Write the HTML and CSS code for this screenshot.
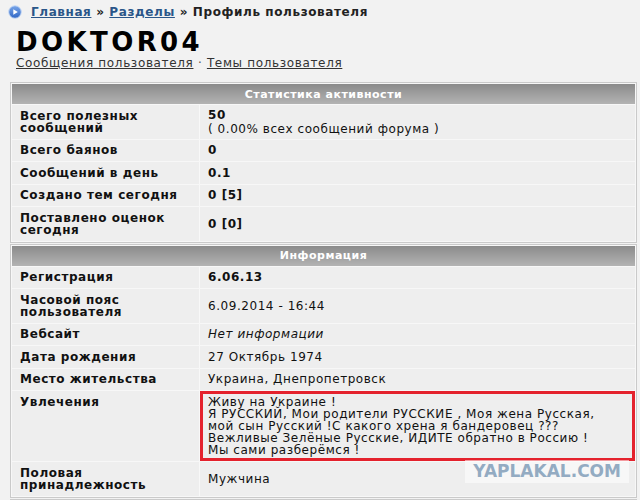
FILE: index.html
```html
<!DOCTYPE html>
<html lang="ru">
<head>
    <meta charset="UTF-8">
    <title>Профиль пользователя</title>
    <link rel="stylesheet" href="styles.css">
</head>
<body>
    <div class="crumbs">
        <svg class="crumb-icon" width="14" height="14" viewBox="0 0 14 14">
            <defs>
                <linearGradient id="ball" x1="0" y1="0" x2="0" y2="1">
                    <stop offset="0" stop-color="#79a6ea"/>
                    <stop offset="1" stop-color="#2f66c4"/>
                </linearGradient>
            </defs>
            <circle cx="7" cy="7" r="6.3" fill="url(#ball)" stroke="#c9dbf5" stroke-width="1"/>
            <path d="M5.3 4.2 L9.8 7 L5.3 9.8 Z" fill="#fff"/>
        </svg>
        <span><a href="#">Главная</a> &raquo; <a href="#">Разделы</a> &raquo; Профиль пользователя</span>
    </div>

    <h1 class="nick">DOKTOR04</h1>
    <div class="user-links">
        <a href="#">Сообщения пользователя</a> &middot; <a href="#">Темы пользователя</a>
    </div>

    <div class="box">
        <table class="profile">
            <tr><th colspan="2">Статистика активности</th></tr>
            <tr>
                <td class="label">Всего полезных сообщений</td>
                <td class="pair"><b>50</b><br>( 0.00% всех сообщений форума )</td>
            </tr>
            <tr><td class="label">Всего баянов</td><td><b>0</b></td></tr>
            <tr><td class="label">Сообщений в день</td><td><b>0.1</b></td></tr>
            <tr><td class="label">Создано тем сегодня</td><td><b>0 [5]</b></td></tr>
            <tr><td class="label">Поставлено оценок сегодня</td><td><b>0 [0]</b></td></tr>
        </table>
    </div>

    <div class="box">
        <table class="profile">
            <tr><th colspan="2">Информация</th></tr>
            <tr><td class="label">Регистрация</td><td><b>6.06.13</b></td></tr>
            <tr><td class="label">Часовой пояс пользователя</td><td>6.09.2014 - 16:44</td></tr>
            <tr><td class="label">Вебсайт</td><td><i>Нет информации</i></td></tr>
            <tr><td class="label">Дата рождения</td><td>27 Октябрь 1974</td></tr>
            <tr><td class="label">Место жительства</td><td>Украина, Днепропетровск</td></tr>
            <tr>
                <td class="label">Увлечения</td>
                <td class="marked">Живу на Украине !
Я РУССКИЙ, Мои родители РУССКИЕ , Моя жена Русская,
мой сын Русский !С какого хрена я бандеровец ???
Вежливые Зелёные Русские, ИДИТЕ обратно в Россию !
Мы сами разберёмся !</td>
            </tr>
            <tr><td class="label">Половая принадлежность</td><td>Мужчина</td></tr>
        </table>
        <div class="watermark">YAPLAKAL.COM</div>
    </div>

    <div class="box">
        <table class="profile">
            <tr><th colspan="2"></th></tr>
        </table>
    </div>
</body>
</html>
```

FILE: styles.css
```css
body {
    font-family: 'DejaVu Sans', Verdana, sans-serif;
    font-size: 12px;
    background: #f2f2f2;
    color: #111;
    margin: 0;
    padding: 0;
}

.crumbs {
    padding: 4px 8px 0 8px;
    height: 15px;
    line-height: 14px;
    font-weight: bold;
    font-size: 12px;
    letter-spacing: 0.6px;
    color: #222;
    display: flex;
    align-items: center;
    gap: 9px;
}

.crumbs a {
    color: #2a5689;
}

.nick {
    font-size: 26px;
    font-weight: bold;
    letter-spacing: 3.4px;
    color: #000;
    margin: 9px 0 0 16px;
    line-height: 28px;
}

.user-links {
    margin-left: 16px;
    font-size: 12px;
    letter-spacing: 0.65px;
    color: #555;
    line-height: 14px;
}

.user-links a {
    color: #333;
}

.box {
    position: relative;
    margin: 12px 3px 0 10px;
    border: 1px solid #cacaca;
    padding: 1px;
    background: #f7f7f7;
}

.box + .box {
    margin-top: 1px;
}

.profile {
    width: 100%;
    border-collapse: separate;
    border-spacing: 0 1px;
    margin: -1px 0;
    letter-spacing: 0.55px;
}

.profile th {
    background: linear-gradient(#8b8b8b, #b3b3b3);
    color: #fff;
    font-weight: bold;
    font-size: 11px;
    letter-spacing: 0.5px;
    height: 20px;
    padding: 0;
    text-align: center;
}

.profile td {
    background: #eeeeee;
    padding: 4.5px 8px 5px 8px;
    line-height: 12px;
    vertical-align: middle;
}

.profile td.label {
    width: 171px;
    font-weight: bold;
    vertical-align: top;
    border-right: 1px solid #f8f8f8;
}

.profile td.pair {
    padding-top: 2.5px;
    padding-bottom: 3px;
    line-height: 14px;
}

.profile td.marked {
    vertical-align: top;
    padding-top: 5px;
    white-space: pre-line;
    outline: 3px solid #e4222d;
    outline-offset: -3px;
}

.watermark {
    position: absolute;
    right: 7px;
    bottom: 14px;
    padding: 1px 8px;
    background: rgba(255, 255, 255, 0.55);
    color: #93abc2;
    font-family: 'DejaVu Sans', Verdana, sans-serif;
    font-weight: bold;
    font-size: 17px;
    line-height: 21px;
}
```
